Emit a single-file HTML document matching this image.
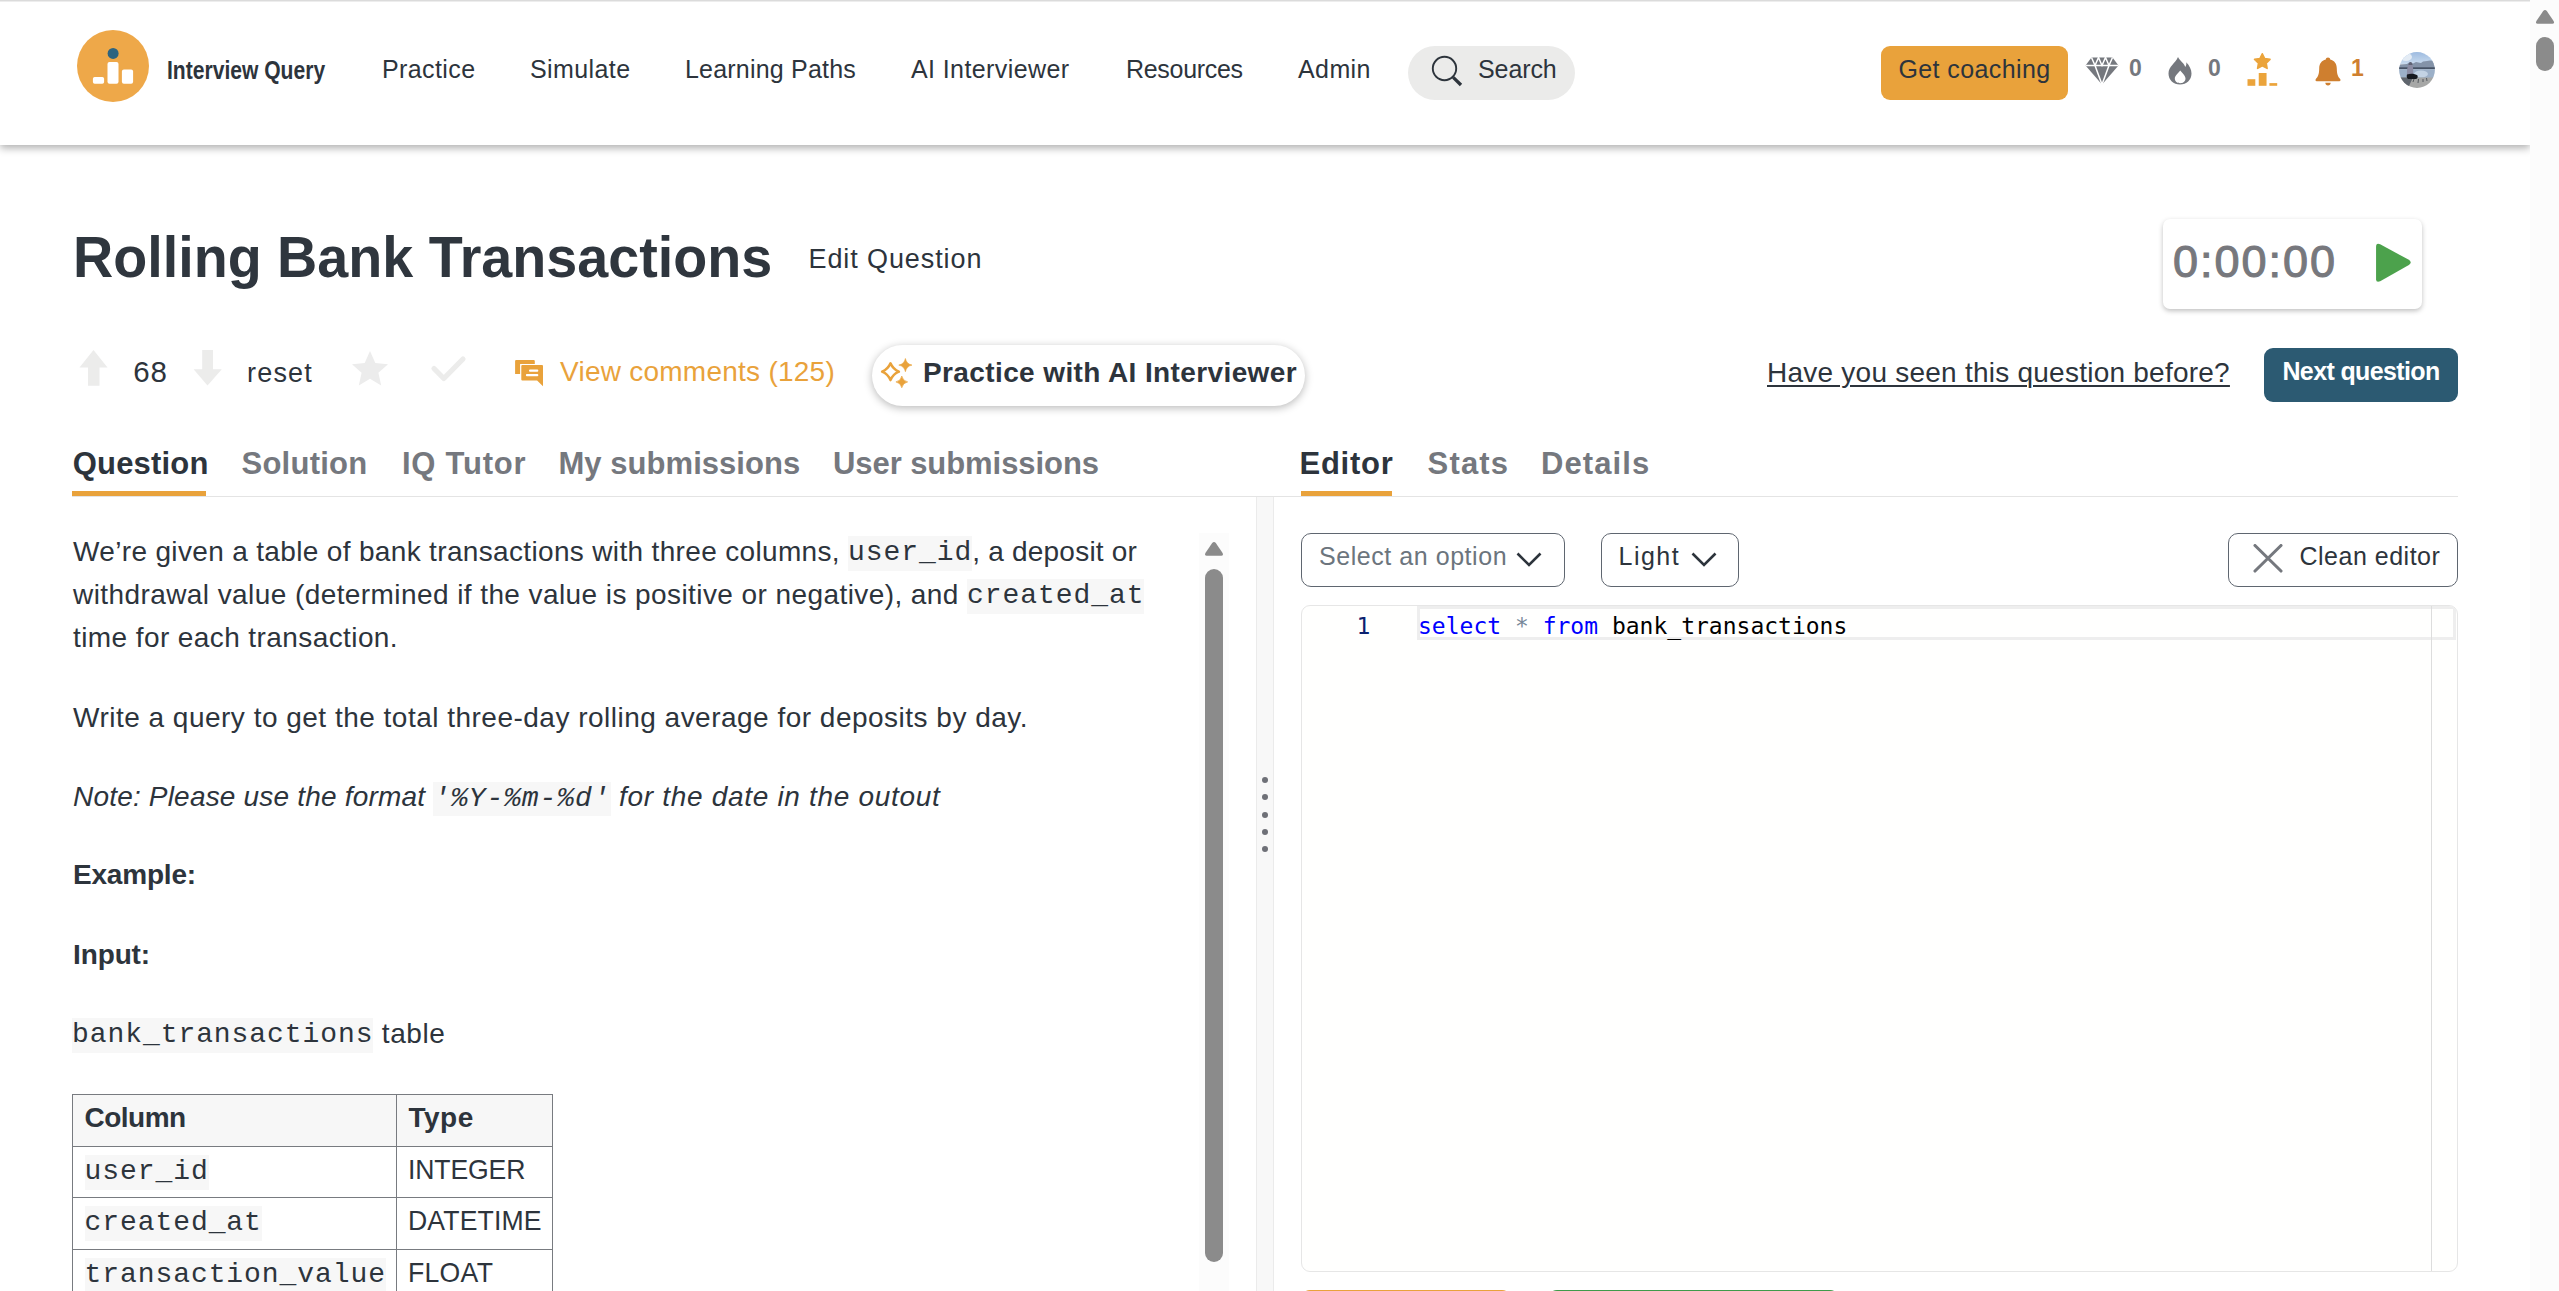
<!DOCTYPE html>
<html lang="en">
<head>
<meta charset="utf-8">
<title>Rolling Bank Transactions - Interview Query</title>
<style>
*{box-sizing:border-box;margin:0;padding:0}
html,body{width:2559px;height:1291px;overflow:hidden;background:#fff}
body{position:relative;font-family:"Liberation Sans",sans-serif;color:#2d343c;font-size:28px}
.abs{position:absolute;white-space:nowrap}
/* header */
#hdr{position:absolute;left:0;top:0;width:2530px;height:145px;background:#fff;box-shadow:0 2.5px 8px rgba(0,0,0,.32)}
#topline{position:absolute;left:0;top:0;width:2530px;height:2px;background:linear-gradient(#d2d2d2,#f6f6f6)}
#pscroll{position:absolute;left:2530px;top:0;width:29px;height:1291px;background:#fcfcfc;z-index:5}
#pthumb{position:absolute;left:2536px;top:37px;width:18px;height:34px;border-radius:9px;background:#8b8b8b;z-index:6}
.nav{position:absolute;top:52px;font-size:25px;line-height:34px;letter-spacing:.4px;color:#2d343c;white-space:nowrap}
#logo{position:absolute;left:77px;top:30px;width:72px;height:72px}
#brand{position:absolute;left:167px;top:53px;font-size:25px;line-height:34px;font-weight:bold;white-space:nowrap;transform-origin:0 50%;transform:scaleX(.843);color:#2d343c}
#search{position:absolute;left:1408px;top:46px;width:167px;height:54px;border-radius:27px;background:#ebebea}
#coach{position:absolute;left:1881px;top:46px;width:187px;height:54px;border-radius:9px;background:#e9a23b;text-align:center;font-size:25px;line-height:47px;letter-spacing:.4px;color:#2d343c}

/* header right */
.hn{position:absolute;top:51px;font-size:23px;line-height:34px;font-weight:bold;color:#75787e;white-space:nowrap}
#avatar{position:absolute;left:2399px;top:52px;width:36px;height:36px}
/* title row */
#title{position:absolute;left:73.2px;top:220.7px;font-size:58px;line-height:72px;font-weight:bold;color:#2f363e;white-space:nowrap;letter-spacing:0;transform-origin:0 50%;transform:scaleX(.96)}
#editq{position:absolute;left:808.5px;top:241px;font-size:27px;line-height:36px;letter-spacing:.9px;color:#2d343c;white-space:nowrap}
#timer{position:absolute;left:2163px;top:219px;width:259px;height:89.5px;border-radius:7px;background:#fff;box-shadow:0 2px 5px rgba(0,0,0,.25)}
#timer span{position:absolute;left:10px;top:16.3px;font-size:45px;line-height:54px;font-weight:normal;-webkit-text-stroke:1.1px #77787d;color:#77787d;letter-spacing:2px}
/* vote row */
.vr{position:absolute;top:354px;font-size:28px;line-height:36px;white-space:nowrap;color:#2d343c}
#aipill{position:absolute;left:872px;top:345px;width:433px;height:61px;border-radius:31px;background:#fff;box-shadow:0 2px 8px rgba(0,0,0,.28)}
#aipill span{position:absolute;left:51px;top:10.2px;font-size:28px;line-height:36px;letter-spacing:.39px;font-weight:bold;color:#2d343c;white-space:nowrap}
#seen{position:absolute;left:1767px;top:354.5px;font-size:28px;line-height:36px;letter-spacing:.24px;text-decoration:underline;text-decoration-thickness:2px;text-underline-offset:2.5px;color:#2d343c;white-space:nowrap}
#nextq{position:absolute;left:2264px;top:348px;width:194px;height:54px;border-radius:9px;background:#2c5a72;color:#fff;font-weight:bold;font-size:25px;letter-spacing:-.63px;line-height:47.5px;text-align:center;white-space:nowrap}
/* tabs */
.tab{position:absolute;top:443.5px;font-size:31px;line-height:40px;letter-spacing:0;font-weight:bold;color:#75787e;white-space:nowrap}
.tab.on{color:#2d343c}
.tabline{position:absolute;top:496px;height:1px;background:#e4e4e4}
.tabul{position:absolute;top:491px;height:5px;background:#e9a23b}

/* left panel */
#lp{position:absolute;left:72px;top:529px;width:1120px;height:762px;overflow:hidden;font-size:28px;line-height:43.2px;color:#2d343c}
#lp p{position:absolute;left:1px;white-space:nowrap}
#lp code{font-family:"Liberation Mono","DejaVu Sans Mono",monospace;font-size:28px;letter-spacing:.93px;background:#f7f7f7;padding:1.4px 0 2.6px;color:#2d343c}
#lp i code{font-style:italic}
#qt{position:absolute;left:0;top:565.3px;border-collapse:collapse;table-layout:fixed;width:480px;font-size:28px;line-height:36px}
.sx{display:inline-block;transform:scaleX(.95);transform-origin:0 50%}
#qt th,#qt td{border:1.5px solid #787b80;padding:0 10.5px 5px 11.5px;text-align:left;white-space:nowrap;height:51.5px;vertical-align:middle;overflow:hidden}
#qt th{background:#f7f7f7;font-weight:bold}
#qt code{position:relative;top:1.5px}
/* left scrollbar + splitter */
#lscroll{position:absolute;left:1199px;top:533px;width:30px;height:758px;background:#fcfcfc}
#lthumb{position:absolute;left:1205px;top:569px;width:18px;height:693px;border-radius:9px;background:#8b8b8b}
#split{position:absolute;left:1256px;top:497px;width:18px;height:794px;background:#f8f8f8;border-left:1px solid #ebebeb;border-right:1px solid #ebebeb}
.dot{position:absolute;left:1262.2px;width:6.2px;height:6.2px;border-radius:50%;background:#6e7077}
/* right panel */
.sel{position:absolute;top:533px;height:54px;border:1.5px solid #5f6670;border-radius:10px;background:#fff;font-size:25px;line-height:46px;white-space:nowrap;color:#2d343c}
.sel span{position:absolute;top:-1.5px}
#ed{position:absolute;left:1301px;top:605px;width:1157px;height:667px;border:1.5px solid #e6e6e6;border-radius:9px;background:#fffffe;overflow:hidden}
#curline{position:absolute;left:114.500px;top:-.5px;width:1039.500px;height:34.500px;border:3px solid #eeeeee}
#ruler{position:absolute;left:1129px;top:0;width:1px;height:667px;background:#dddddd}
.mono{font-family:"DejaVu Sans Mono","Liberation Mono",monospace;font-size:23px;line-height:33px;white-space:pre;position:absolute;top:3.8px}
#runb{position:absolute;left:1301px;top:1289.5px;width:210px;height:40px;border-radius:9px;background:#e9a23b}
#subb{position:absolute;left:1548px;top:1289.5px;width:291px;height:40px;border-radius:9px;background:#3f9a4a}
</style>
</head>
<body>
<div id="pscroll"></div>
<div id="pthumb"></div>
<svg class="abs" style="left:2535px;top:9px;z-index:6" width="20" height="16" viewBox="0 0 20 16"><path d="M10 1 Q11 1 11.800 2.100 L18.600 12 Q19.800 14.800 17.300 14.800 H2.700 Q0.200 14.800 1.400 12 L8.200 2.100 Q9 1 10 1 Z" fill="#8b8b8b"/></svg>
<div id="hdr">
  <div id="topline"></div>
  <svg id="logo" viewBox="0 0 72 72"><circle cx="36" cy="36" r="36" fill="#eea849"/><circle cx="36.1" cy="23.4" r="5.5" fill="#2d6480"/><rect x="30.5" y="32.1" width="11" height="21.7" rx="2" fill="#fff"/><rect x="15.9" y="46.9" width="11.2" height="6.9" rx="1.8" fill="#fff"/><rect x="44.900" y="39.4" width="11.2" height="14.4" rx="2" fill="#fff"/></svg>
  <div id="brand">Interview Query</div>
  <div class="nav" style="left:382px">Practice</div>
  <div class="nav" style="left:530px">Simulate</div>
  <div class="nav" style="left:685px;letter-spacing:.2px">Learning Paths</div>
  <div class="nav" style="left:911px">AI Interviewer</div>
  <div class="nav" style="left:1126px;letter-spacing:-.3px">Resources</div>
  <div class="nav" style="left:1298px">Admin</div>
  <div id="search"></div>
  <div class="nav" style="left:1478px;letter-spacing:-.1px">Search</div>
  <div id="coach">Get coaching</div>
  <svg class="abs" style="left:1430px;top:54px" width="36" height="36" viewBox="0 0 36 36"><circle cx="14.5" cy="14.5" r="11.7" fill="none" stroke="#2d343c" stroke-width="1.9"/><path d="M23.2 23.4 L31 31" stroke="#2d343c" stroke-width="3.3" stroke-linecap="butt"/></svg>
  <svg class="abs" style="left:2085px;top:57px" width="34" height="28" viewBox="0 0 34 28"><path d="M6.500 0.5 H27.5 L33.5 8.5 L17 27.5 L0.5 8.5 Z" fill="#75787e"/><path d="M0.5 8.5 H33.5 M6.5 0.5 L10 8.500 L13.5 0.5 L17 8.500 L20.500 0.5 L24 8.500 L27.500 0.5 M10 8.500 L17 27.500 L24 8.500" fill="none" stroke="#fff" stroke-width="1.5"/></svg>
  <div class="hn" style="left:2129px">0</div>
  <svg class="abs" style="left:2168px;top:56px" width="24" height="29" viewBox="0 0 24 29"><path d="M10 1 C12 5 16.500 7.500 17.200 11 C18.500 9.500 18.500 7.500 18.200 6.200 C21.500 9.500 23.500 13.500 23.500 17.500 C23.500 24 18.500 28.500 12 28.500 C5.500 28.500 0.500 24 0.500 17.500 C0.500 10.500 7.500 7 10 1 Z" fill="#75787e"/><path d="M12.200 14.500 C14.500 17.500 17.500 19.500 17.500 22.500 C17.500 25.500 15 27.200 12.200 27.200 C9.300 27.200 6.800 25.500 6.800 22.500 C6.800 19.500 10.200 17.500 12.200 14.500 Z" fill="#fff"/></svg>
  <div class="hn" style="left:2208px">0</div>
  <svg class="abs" style="left:2247px;top:53px" width="31" height="34" viewBox="0 0 31 34"><path d="M15.300 0.800 L17.700 5.600 L23 6.400 L19.200 10.100 L20.100 15.400 L15.300 12.900 L10.600 15.400 L11.500 10.100 L7.600 6.400 L12.900 5.600 Z" fill="#eba43b" stroke="#eba43b" stroke-width="1.6" stroke-linejoin="round"/><rect x="0.5" y="26.200" width="7.800" height="6.600" fill="#eba43b"/><rect x="11.750" y="20" width="7.800" height="12.800" fill="#eba43b"/><rect x="22.400" y="30.100" width="7.800" height="2.700" fill="#eba43b"/></svg>
  <svg class="abs" style="left:2315px;top:57px" width="26" height="29" viewBox="0 0 26 29"><path d="M13 0.500 C14.300 0.500 15.200 1.400 15.200 2.600 C19.500 3.600 21.800 7 21.800 11.500 C21.800 17.500 23.200 20 25.300 22.200 C25.800 23 25.500 24.200 24.300 24.200 H1.700 C0.500 24.200 0.200 23 0.700 22.200 C2.800 20 4.200 17.500 4.200 11.500 C4.200 7 6.500 3.600 10.800 2.600 C10.800 1.400 11.700 0.500 13 0.500 Z" fill="#cf7f2f"/><path d="M10.300 25.800 H15.700 C15.700 27.400 14.500 28.500 13 28.500 C11.500 28.500 10.300 27.400 10.300 25.800 Z" fill="#cf7f2f"/></svg>
  <div class="hn" style="left:2351px;color:#cf7f2f">1</div>
  <svg id="avatar" viewBox="0 0 36 36"><defs><clipPath id="avc"><circle cx="18" cy="18" r="17.900"/></clipPath><linearGradient id="avs" x1="0" y1="0" x2="0" y2="1"><stop offset="0" stop-color="#9dbbe0"/><stop offset="1" stop-color="#c9dbee"/></linearGradient></defs><g clip-path="url(#avc)"><rect width="36" height="12" fill="url(#avs)"/><ellipse cx="7" cy="5" rx="6" ry="4" fill="#e4ecf5"/><path d="M0 12.500 L8 12 L10 10.500 L14 11.500 L17 10 L22 11 L24 9.500 L28 9 L31 8.500 L36 9 V17 H0 Z" fill="#8493a8"/><rect y="15.300" width="36" height="2" fill="#465264"/><rect y="17.200" width="36" height="9" fill="#9cb0c8"/><ellipse cx="22" cy="22" rx="7" ry="3.500" fill="#c3d3e4"/><path d="M0 25.500 H36 V36 H0 Z" fill="#a6a7a6"/><path d="M0 25.500 H14 L9 36 H0 Z" fill="#5f656d"/><path d="M14 30 l1 -3 M19 31 l.5 -4 M24 30 l0 -3 M28 29 l-.5 -3" stroke="#55595e" stroke-width="1" fill="none"/><path d="M8 24 C7.500 17 9 10.500 11.500 10.200 C14 10.500 14.500 17 14 23 Z" fill="#8b8ca3"/><path d="M9.500 13 C9.500 11 10.500 10 11.500 10 C12.500 10 13.500 11 13.500 13 Z" fill="#5f6273"/><path d="M8 22.500 C11 21.500 16 21.500 18.500 23.500 C19 25 18.500 26.500 17 27 H9 C7.500 26 7.500 24 8 22.500 Z" fill="#171a20"/></g></svg>
</div>

<!-- title row -->
<div id="title">Rolling Bank Transactions</div>
<div id="editq">Edit Question</div>
<div id="timer"><span>0:00:00</span>
  <svg style="position:absolute;left:209.5px;top:22px" width="41" height="44" viewBox="0 0 40 42" preserveAspectRatio="none"><path d="M3 5.5 Q3 1.5 7 3.2 L35 18 Q38.5 20.5 35 23 L7 38.5 Q3 40 3 36.5 Z" fill="#4ca24c"/></svg>
</div>
<!-- vote row -->
<svg class="abs" style="left:79px;top:350px" width="29" height="36" viewBox="0 0 29 36"><path d="M14.500 0 L28.500 17.500 H20.500 V35.800 H9 V17.500 H0.500 Z" fill="#ececeb"/></svg>
<div class="vr" style="left:133.3px;font-size:29.5px;top:354.3px;letter-spacing:.7px">68</div>
<svg class="abs" style="left:193px;top:350px" width="29" height="36" viewBox="0 0 29 36"><path d="M14.500 35.600 L28.800 19.200 H20 V-.3 H9.200 V19.200 H0.600 Z" fill="#ececeb"/></svg>
<div class="vr" style="left:247px;font-size:27px;top:354.8px;letter-spacing:1.2px">reset</div>
<svg class="abs" style="left:351px;top:350px" width="38" height="36" viewBox="0 0 38 36"><path d="M19 1 L24.3 13 L37 14.2 L27.4 22.8 L30.2 35.4 L19 28.8 L7.8 35.4 L10.6 22.8 L1 14.2 L13.7 13 Z" fill="#ececec"/></svg>
<svg class="abs" style="left:429px;top:354px" width="40" height="30" viewBox="0 0 40 30"><path d="M5 14.500 L14.800 24.500 L34 5" fill="none" stroke="#ececeb" stroke-width="5.2" stroke-linecap="round" stroke-linejoin="round"/></svg>
<svg class="abs" style="left:514px;top:358px" width="32" height="30" viewBox="0 0 32 30"><path d="M2.100 2.100 H19.800 Q20.800 2.100 20.800 3.100 V6 H6.100 V15.900 H1.100 V3.100 Q1.100 2.100 2.100 2.100 Z" fill="#e9a23b"/><path d="M8.300 7.100 H28 Q29 7.100 29 8.100 V28.200 L23.100 22.600 H8.300 Q7.300 22.600 7.300 21.600 V8.100 Q7.300 7.100 8.300 7.100 Z" fill="#e9a23b"/><rect x="15" y="11.600" width="9.300" height="2.100" rx="1" fill="#fff"/><rect x="11.900" y="16" width="12.400" height="2.200" rx="1" fill="#fff"/></svg>
<div class="vr" style="left:560px;color:#e9a23b;letter-spacing:.25px">View comments (125)</div>
<div id="aipill">
  <svg style="position:absolute;left:8px;top:13px" width="34" height="34" viewBox="0 0 34 34"><path d="M10.5 5.3 Q13.02 11.18 18.9 13.7 Q13.02 16.22 10.5 22.1 Q7.98 16.22 2.1 13.7 Q7.98 11.18 10.5 5.3 Z" fill="none" stroke="#e9a23b" stroke-width="2.5" stroke-linejoin="round"/><path d="M25.4 0.5 Q26.52 5.98 32 7.1 Q26.52 8.22 25.4 13.7 Q24.28 8.22 18.8 7.1 Q24.28 5.98 25.4 0.5 Z" fill="#e9a23b" stroke="#e9a23b" stroke-width=".6" stroke-linejoin="round"/><path d="M21.8 18 Q22.8 22.9 27.7 23.9 Q22.8 24.9 21.8 29.8 Q20.8 24.9 15.9 23.9 Q20.8 22.9 21.8 18 Z" fill="#e9a23b" stroke="#e9a23b" stroke-width=".6" stroke-linejoin="round"/></svg>
  <span>Practice with AI Interviewer</span>
</div>
<div id="seen">Have you seen this question before?</div>
<div id="nextq">Next question</div>
<!-- tabs -->
<div class="tab on" style="left:72.7px;letter-spacing:.2px">Question</div>
<div class="tab" style="left:241.5px;letter-spacing:.25px">Solution</div>
<div class="tab" style="left:402px;letter-spacing:.75px">IQ Tutor</div>
<div class="tab" style="left:558.5px;letter-spacing:.04px">My submissions</div>
<div class="tab" style="left:833px;letter-spacing:-.07px">User submissions</div>
<div class="tab on" style="left:1299.5px;letter-spacing:.75px">Editor</div>
<div class="tab" style="left:1427.5px;letter-spacing:1.2px">Stats</div>
<div class="tab" style="left:1541px;letter-spacing:1.1px">Details</div>
<div class="tabline" style="left:72px;width:2386px"></div>
<div class="tabul" style="left:72px;width:134px"></div>
<div class="tabul" style="left:1301px;width:91px"></div>

<!-- left panel -->
<div id="lp">
  <p style="top:.56px"><span style="letter-spacing:.34px">We’re given a table of bank transactions with three columns, </span><code>user_id</code><span style="letter-spacing:.22px">, a deposit or</span></p>
  <p style="top:43.76px"><span style="letter-spacing:.42px">withdrawal value (determined if the value is positive or negative), and </span><code>created_at</code></p>
  <p style="top:86.96px;letter-spacing:.41px">time for each transaction.</p>
  <p style="top:167.100px;letter-spacing:.49px">Write a query to get the total three-day rolling average for deposits by day.</p>
  <p style="top:245.9px"><i><span style="letter-spacing:.19px">Note: Please use the format </span><code>'%Y-%m-%d'</code><span style="letter-spacing:.69px"> for the date in the outout</span></i></p>
  <p style="top:324px;letter-spacing:-.19px"><b>Example:</b></p>
  <p style="top:403.500px;letter-spacing:-.12px"><b>Input:</b></p>
  <p style="top:482.600px;left:0"><code>bank_transactions</code><span style="letter-spacing:.58px"> table</span></p>
  <table id="qt">
    <tr><th style="width:324px;letter-spacing:-.5px">Column</th><th style="width:156px;letter-spacing:.5px">Type</th></tr>
    <tr><td><code>user_id</code></td><td style="padding-left:10.8px"><span class="sx" style="letter-spacing:-.15px">INTEGER</span></td></tr>
    <tr><td><code>created_at</code></td><td style="padding-left:10.5px"><span class="sx" style="letter-spacing:.15px">DATETIME</span></td></tr>
    <tr><td><code>transaction_value</code></td><td style="padding-left:10.5px"><span class="sx" style="letter-spacing:.3px">FLOAT</span></td></tr>
  </table>
</div>
<div id="lscroll"></div>
<svg class="abs" style="left:1204px;top:541px" width="20" height="16" viewBox="0 0 20 16"><path d="M10 1 Q11 1 11.800 2.100 L18.600 12 Q19.800 14.800 17.300 14.800 H2.700 Q0.200 14.800 1.400 12 L8.200 2.100 Q9 1 10 1 Z" fill="#8b8b8b"/></svg>
<div id="lthumb"></div>
<div id="split"></div>
<div class="dot" style="top:776.5px"></div><div class="dot" style="top:793.5px"></div><div class="dot" style="top:811.5px"></div><div class="dot" style="top:828.5px"></div><div class="dot" style="top:845.5px"></div>
<!-- right panel -->
<div class="sel" style="left:1301px;width:264px"><span style="left:17px;color:#6c757d;letter-spacing:.55px">Select an option</span>
  <svg style="position:absolute;left:213px;top:17px" width="28" height="18" viewBox="0 0 28 18"><path d="M2.500 2.500 L14 14 L25.500 2.500" fill="none" stroke="#2d343c" stroke-width="2.6"/></svg></div>
<div class="sel" style="left:1601px;width:138px"><span style="left:16.5px;letter-spacing:1.5px">Light</span>
  <svg style="position:absolute;left:88px;top:17px" width="28" height="18" viewBox="0 0 28 18"><path d="M2.500 2.500 L14 14 L25.500 2.500" fill="none" stroke="#2d343c" stroke-width="2.6"/></svg></div>
<div class="sel" style="left:2228px;width:230px"><svg style="position:absolute;left:24px;top:10px" width="32" height="32" viewBox="0 0 32 32"><path d="M2 1.500 L28 27 M28 1.500 L2 27" fill="none" stroke="#75787e" stroke-width="3.1" stroke-linecap="round"/></svg><span style="left:70.5px;letter-spacing:.5px">Clean editor</span></div>
<div id="ed">
  <div id="curline"></div>
  <div id="ruler"></div>
  <div class="mono" style="left:54.500px;color:#0b216f">1</div>
  <div class="mono" style="left:116px;color:#000"><span style="color:#0000ff">select</span> <span style="color:#778899">*</span> <span style="color:#0000ff">from</span> bank_transactions</div>
</div>
<div id="runb"></div><div id="subb"></div>
</body>
</html>
